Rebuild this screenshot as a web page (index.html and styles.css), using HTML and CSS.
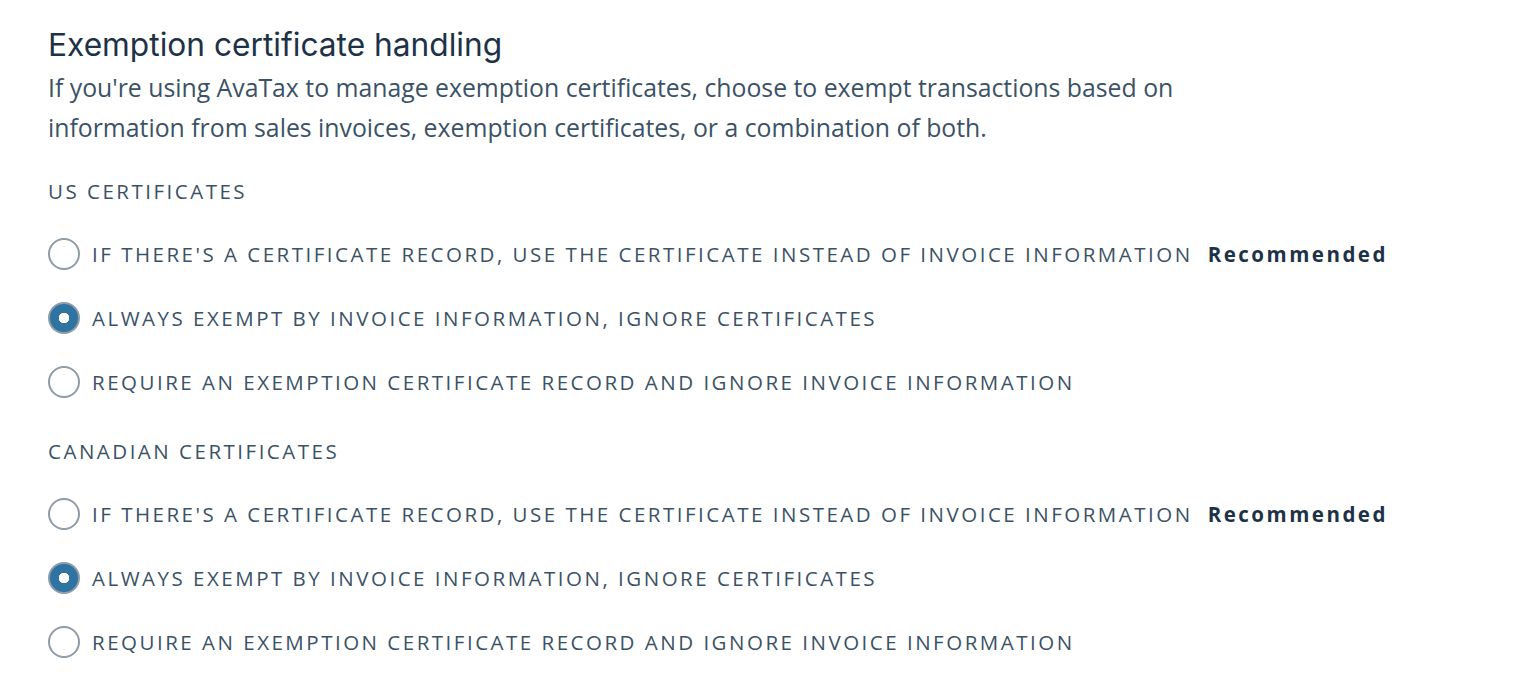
FILE: index.html
```html
<!DOCTYPE html>
<html lang="en">
<head>
	<meta charset="UTF-8">
	<title>Exemption certificate handling</title>
	<link rel="stylesheet" href="styles.css">
</head>
<body>
	<div class="panel">
		<h2 class="title">Exemption certificate handling</h2>
		<p class="desc">If you're using AvaTax to manage exemption certificates, choose to exempt transactions based on<br>information from sales invoices, exemption certificates, or a combination of both.</p>

		<fieldset class="group">
			<legend class="group-label">US certificates</legend>
			<label class="option">
				<input type="radio" name="us" value="certificate">
				<span class="radio"></span>
				<span class="option-text">If there's a certificate record, use the certificate instead of invoice information</span>
				<span class="tag">Recommended</span>
			</label>
			<label class="option">
				<input type="radio" name="us" value="invoice" checked>
				<span class="radio"></span>
				<span class="option-text">Always exempt by invoice information, ignore certificates</span>
			</label>
			<label class="option">
				<input type="radio" name="us" value="require">
				<span class="radio"></span>
				<span class="option-text">Require an exemption certificate record and ignore invoice information</span>
			</label>
		</fieldset>

		<fieldset class="group">
			<legend class="group-label">Canadian certificates</legend>
			<label class="option">
				<input type="radio" name="ca" value="certificate">
				<span class="radio"></span>
				<span class="option-text">If there's a certificate record, use the certificate instead of invoice information</span>
				<span class="tag">Recommended</span>
			</label>
			<label class="option">
				<input type="radio" name="ca" value="invoice" checked>
				<span class="radio"></span>
				<span class="option-text">Always exempt by invoice information, ignore certificates</span>
			</label>
			<label class="option">
				<input type="radio" name="ca" value="require">
				<span class="radio"></span>
				<span class="option-text">Require an exemption certificate record and ignore invoice information</span>
			</label>
		</fieldset>
	</div>
</body>
</html>
```

FILE: styles.css
```css
*{
	margin: 0;
	padding: 0;
	box-sizing: border-box;
}
body{
	background: #fff;
	color: #3b5266;
	font-family: "Open Sans", "Liberation Sans", sans-serif;
}
.panel{
	padding: 26px 0 0 48px;
}
.title{
	font-family: Inter, "Liberation Sans", sans-serif;
	font-size: 31.7px;
	font-weight: 400;
	line-height: 38px;
	color: #1d3247;
}
.desc{
	font-size: 24.8px;
	line-height: 40px;
	margin-top: 3px;
}
.group{
	border: none;
	margin-top: 30px;
}
.group + .group{
	margin-top: 23px;
}
.group-label{
	font-size: 20.5px;
	letter-spacing: 2.5px;
	text-transform: uppercase;
	line-height: 28px;
	margin-bottom: 17px;
}
.option{
	display: flex;
	align-items: center;
	height: 64px;
	cursor: pointer;
}
.option input{
	display: none;
}
.radio{
	width: 32px;
	height: 32px;
	border: 2px solid #8e9ca7;
	border-radius: 50%;
	margin-right: 12px;
	flex-shrink: 0;
	background: #fff;
}
.option input:checked + .radio{
	background: radial-gradient(circle, #fff 0 5px, #2f73a3 5.5px);
}
.option-text{
	font-size: 20.5px;
	letter-spacing: 2.5px;
	text-transform: uppercase;
}
.tag{
	margin-left: 15px;
	font-size: 20.5px;
	font-weight: 700;
	letter-spacing: 2.5px;
	color: #1d3247;
}
```
